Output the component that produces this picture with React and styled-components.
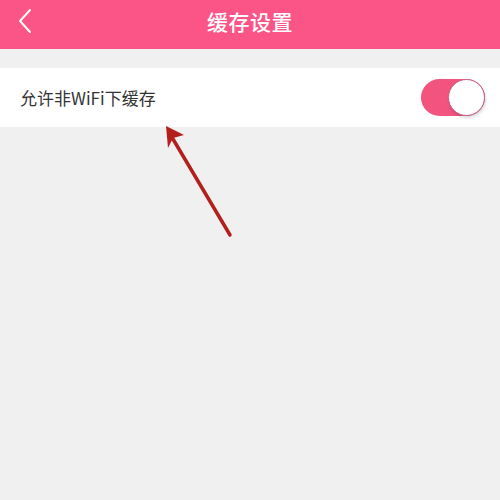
import React, { useState } from 'react';
import styled, { createGlobalStyle } from 'styled-components';

const GlobalStyle = createGlobalStyle`
  html, body {
    margin: 0;
    padding: 0;
    background: #f0f0f0;
    font-family: "Noto Sans CJK SC", "Noto Sans", sans-serif;
  }
`;

const Page = styled.div`
  position: relative;
  width: 500px;
  height: 500px;
  background: #f0f0f0;
  overflow: hidden;
`;

const NavBar = styled.div`
  position: relative;
  height: 49px;
  background: #fb5487;
  display: flex;
  align-items: center;
  justify-content: center;
`;

const BackButton = styled.button`
  position: absolute;
  left: 14px;
  top: 7px;
  width: 24px;
  height: 28px;
  padding: 0;
  border: none;
  background: transparent;
  cursor: pointer;
`;

const Title = styled.h1`
  margin: 0;
  color: #fff;
  font-size: 21px;
  font-weight: 500;
  letter-spacing: 0.5px;
  line-height: 1;
  margin-top: -6px;
`;

const Section = styled.div`
  margin-top: 19px;
  background: #fff;
`;

const Row = styled.div`
  height: 59px;
  display: flex;
  align-items: center;
  justify-content: space-between;
  padding: 0 15px 0 20px;
`;

const Label = styled.span`
  color: #333;
  font-size: 17px;
  margin-top: -1px;
`;

const Switch = styled.button`
  position: relative;
  width: 64px;
  height: 37px;
  padding: 0;
  border: none;
  border-radius: 19px;
  background: ${p => (p.on ? '#f2537f' : '#ddd')};
  cursor: pointer;
  &::after {
    content: '';
    position: absolute;
    top: 0;
    left: ${p => (p.on ? '27px' : '0')};
    width: 35px;
    height: 35px;
    border-radius: 50%;
    background: #fff;
    border: 1px solid #c9607e;
    box-shadow: 1px 2px 3px rgba(0, 0, 0, 0.15);
  }
`;

const Pointer = styled.svg`
  position: absolute;
  left: 0;
  top: 0;
  pointer-events: none;
`;

export default function App() {
  const [allow, setAllow] = useState(true);

  return (
    <Page>
      <GlobalStyle />
      <NavBar>
        <BackButton aria-label="back">
          <svg width="24" height="28" viewBox="0 0 24 28">
            <polyline points="16,3 6,14 16,25" fill="none" stroke="#fff" strokeWidth="2" strokeLinecap="round" strokeLinejoin="round" />
          </svg>
        </BackButton>
        <Title>缓存设置</Title>
      </NavBar>
      <Section>
        <Row>
          <Label>允许非WiFi下缓存</Label>
          <Switch on={allow ? 1 : 0} onClick={() => setAllow(!allow)} />
        </Row>
      </Section>
      <Pointer width="500" height="500" viewBox="0 0 500 500">
        <line x1="230" y1="235" x2="170" y2="134" stroke="#b3201c" strokeWidth="3.5" strokeLinecap="round" />
        <polygon points="166,126 168,148 173,138 184,135" fill="#b3201c" />
      </Pointer>
    </Page>
  );
}
